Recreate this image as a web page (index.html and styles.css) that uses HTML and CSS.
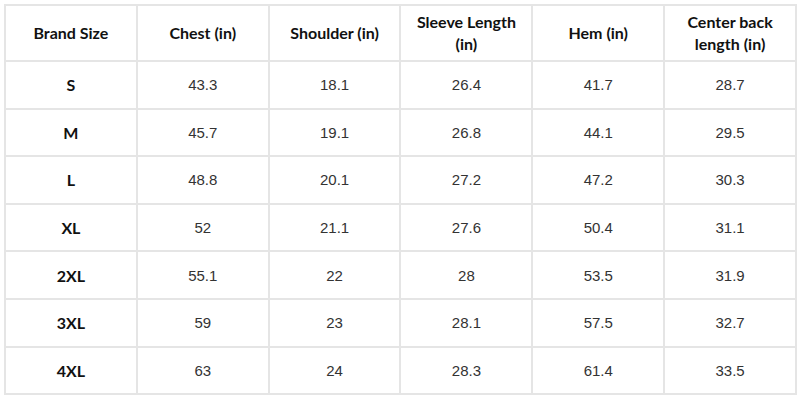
FILE: index.html
```html
<!DOCTYPE html>
<html>
<head>
<meta charset="utf-8">
<link rel="stylesheet" href="styles.css">
</head>
<body>
<table class="size-table">
  <thead>
    <tr>
      <th>Brand Size</th>
      <th>Chest (in)</th>
      <th>Shoulder (in)</th>
      <th>Sleeve Length<br>(in)</th>
      <th>Hem (in)</th>
      <th>Center back<br>length (in)</th>
    </tr>
  </thead>
  <tbody>
    <tr><td class="size">S</td><td>43.3</td><td>18.1</td><td>26.4</td><td>41.7</td><td>28.7</td></tr>
    <tr><td class="size">M</td><td>45.7</td><td>19.1</td><td>26.8</td><td>44.1</td><td>29.5</td></tr>
    <tr><td class="size">L</td><td>48.8</td><td>20.1</td><td>27.2</td><td>47.2</td><td>30.3</td></tr>
    <tr><td class="size">XL</td><td>52</td><td>21.1</td><td>27.6</td><td>50.4</td><td>31.1</td></tr>
    <tr><td class="size">2XL</td><td>55.1</td><td>22</td><td>28</td><td>53.5</td><td>31.9</td></tr>
    <tr><td class="size">3XL</td><td>59</td><td>23</td><td>28.1</td><td>57.5</td><td>32.7</td></tr>
    <tr><td class="size">4XL</td><td>63</td><td>24</td><td>28.3</td><td>61.4</td><td>33.5</td></tr>
  </tbody>
</table>
</body>
</html>
```
FILE: styles.css
```css
html, body {
  margin: 0;
  padding: 0;
  background: #ffffff;
}
body {
  padding: 4px 3px 0 4px;
}
.size-table {
  width: 793px;
  border-collapse: collapse;
  table-layout: fixed;
}
.size-table th,
.size-table td {
  border: 2px solid #e5e5e5;
  text-align: center;
  vertical-align: middle;
  padding: 0;
}
.size-table th {
  height: 54px;
  font-family: Lato, "Open Sans", sans-serif;
  font-weight: 700;
  font-size: 16px;
  line-height: 22px;
  color: #111111;
}
.size-table td {
  height: 45.6px;
  font-family: "Liberation Sans", Arial, sans-serif;
  font-size: 15px;
  color: #333333;
}
.size-table td.size {
  font-family: Lato, "Open Sans", sans-serif;
  font-weight: 700;
  font-size: 16px;
  color: #111111;
}
```
